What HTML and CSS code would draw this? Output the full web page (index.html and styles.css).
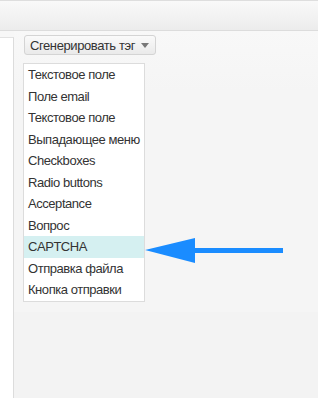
FILE: index.html
```html
<!DOCTYPE html>
<html>
   <head>
      <meta charset="UTF-8">
      <title>Generate tag</title>
      <link rel="stylesheet" href="styles.css">
   </head>
   <body>
      <div class="top-bar"></div>
      <div class="main-div">
         <div class="side-panel"></div>
         <div class="content-div">
            <div class="content-inner">
               <button class="tag-button">Сгенерировать тэг <span class="caret"></span></button>
               <ul class="tag-list">
                  <li>Текстовое поле</li>
                  <li>Поле email</li>
                  <li>Текстовое поле</li>
                  <li>Выпадающее меню</li>
                  <li>Checkboxes</li>
                  <li>Radio buttons</li>
                  <li>Acceptance</li>
                  <li>Вопрос</li>
                  <li class="selected">CAPTCHA</li>
                  <li>Отправка файла</li>
                  <li>Кнопка отправки</li>
               </ul>
            </div>
         </div>
      </div>
      <svg class="pointer-arrow" width="140" height="28" viewBox="0 0 140 28">
         <polygon points="0,12 50,0 50,10 138,10 138,15 50,15 50,25" fill="#1a8cff"/>
      </svg>
   </body>
</html>
```
FILE: styles.css
```css
body {
   margin: 0;
   background-color: #f2f2f2;
   font-family: "Liberation Sans", Arial, sans-serif;
   font-size: 13px;
   color: #333;
}
.top-bar {
   height: 29px;
   border-top: 1px solid #dedede;
   border-bottom: 1px solid #dcdcdc;
   background: linear-gradient(#f9f9f9, #ececec);
}
.main-div {
   display: flex;
   min-height: calc(100vh - 31px);
   background-color: #f7f7f7;
}
.side-panel {
   width: 13px;
   margin-top: 6px;
   background-color: white;
   border-top: 1px solid #e2e2e2;
   border-right: 1px solid #dcdcdc;
}
.content-div {
   flex: 1;
   background-color: #f3f3f3;
}
.content-inner {
   padding: 4px 0 10px 9px;
   background: linear-gradient(#f8f8f8, #f5f5f5 60px);
}
.tag-button {
   display: flex;
   align-items: center;
   height: 20px;
   margin-left: 1px;
   padding: 0 6px 0 5px;
   border: 1px solid #d4d4d4;
   border-radius: 3px;
   background: linear-gradient(#fafafa, #eaeaea);
   font-family: "Liberation Sans", Arial, sans-serif;
   font-size: 13px;
   letter-spacing: -0.4px;
   color: #333;
}
.caret {
   width: 0;
   height: 0;
   margin-left: 6px;
   margin-top: 1px;
   border-left: 4px solid transparent;
   border-right: 4px solid transparent;
   border-top: 5px solid #777;
}
.tag-list {
   width: 120px;
   margin: 8px 0 0 0;
   padding: 0;
   list-style: none;
   background-color: white;
   border: 1px solid #dcdcdc;
}
.tag-list li {
   height: 21.5px;
   line-height: 21.5px;
   padding-left: 4px;
   white-space: nowrap;
   letter-spacing: -0.45px;
   color: #333;
}
.tag-list .selected {
   background-color: #d5f0f1;
}
.pointer-arrow {
   position: absolute;
   left: 145px;
   top: 238px;
}
```
